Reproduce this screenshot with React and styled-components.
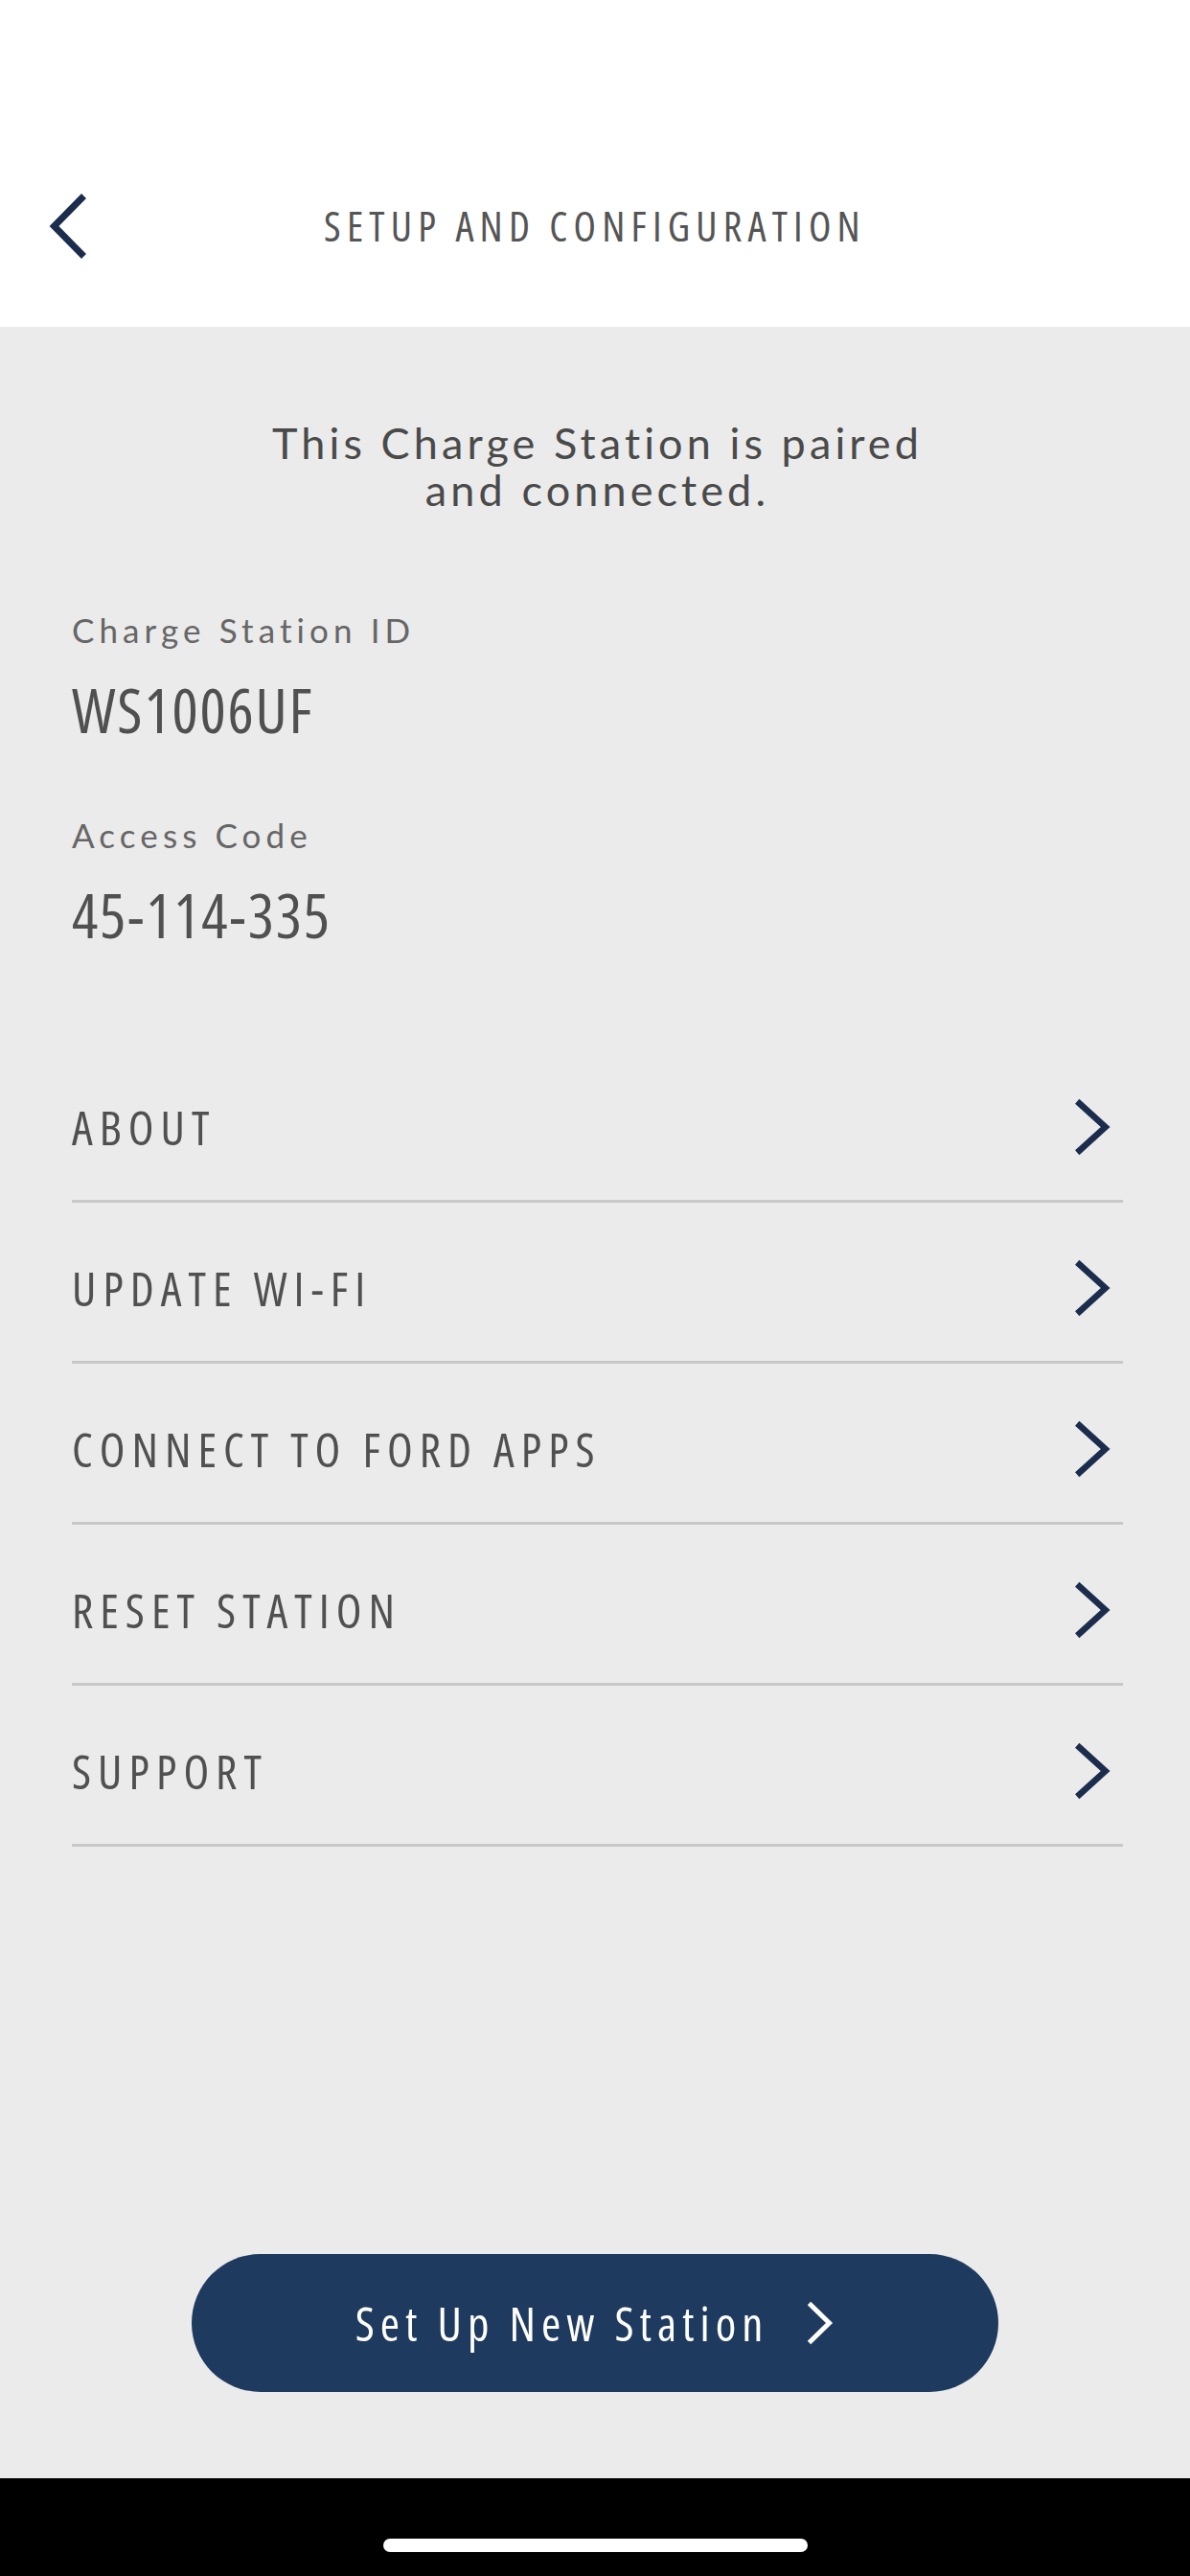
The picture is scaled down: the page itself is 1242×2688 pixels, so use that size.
import React from "react";
import styled, { createGlobalStyle } from "styled-components";

const GlobalStyle = createGlobalStyle`
  html, body { margin: 0; padding: 0; background: #ebebeb; }
  * { box-sizing: border-box; }
`;

const condensed = `"Open Sans", "Noto Sans", sans-serif`;
const humanist = `Lato, "Noto Sans", sans-serif`;

const Screen = styled.div`
  width: 1242px;
  height: 2688px;
  display: flex;
  flex-direction: column;
  background: #ebebeb;
  overflow: hidden;
`;

const Header = styled.header`
  background: #ffffff;
  height: 341px;
  padding-top: 130px;
  flex-shrink: 0;
`;

const NavBar = styled.div`
  height: 211px;
  display: grid;
  grid-template-columns: 160px 1fr 160px;
  align-items: center;
`;

const BackButton = styled.button`
  border: 0;
  background: none;
  padding: 0 0 0 50px;
  display: flex;
  align-items: center;
  height: 80px;
  cursor: pointer;
`;

const Title = styled.h1`
  margin: 0;
  text-align: center;
  font-family: ${condensed};
  font-stretch: 75%;
  font-weight: 400;
  font-size: 43px;
  letter-spacing: 6.2px;
  color: #555555;
  line-height: 1;
`;

const Content = styled.main`
  padding: 0 70px 0 75px;
  display: flex;
  flex-direction: column;
`;

const Message = styled.p`
  margin: 97px 0 0;
  text-align: center;
  font-family: ${humanist};
  font-size: 45px;
  line-height: 49px;
  letter-spacing: 4.1px;
  color: #4a4a4a;
`;

const InfoBlock = styled.div`
  margin-top: ${(p) => p.$top}px;
  display: flex;
  flex-direction: column;
  gap: 28px;
`;

const InfoLabel = styled.div`
  font-family: ${humanist};
  font-size: 35px;
  line-height: 40px;
  letter-spacing: 5.1px;
  color: #666666;
`;

const InfoValue = styled.div`
  font-family: ${condensed};
  font-stretch: 75%;
  font-size: 64px;
  line-height: 72px;
  letter-spacing: 1.8px;
  color: #505050;
`;

const Menu = styled.nav`
  margin-top: 96px;
  display: flex;
  flex-direction: column;
`;

const MenuRow = styled.div`
  height: 168px;
  padding-top: 12px;
  display: flex;
  align-items: center;
  justify-content: space-between;
  border-bottom: 3px solid #c8c8c8;
`;

const MenuLabel = styled.span`
  font-family: ${condensed};
  font-stretch: 75%;
  font-size: 49px;
  letter-spacing: 7px;
  color: #505050;
`;

const ChevronBox = styled.span`
  display: flex;
  margin-right: 12px;
`;

const Spacer = styled.div`
  flex: 1;
`;

const PrimaryButton = styled.button`
  align-self: center;
  width: 842px;
  height: 144px;
  border: 0;
  border-radius: 72px;
  background: #1f3a5f;
  color: #ffffff;
  display: flex;
  align-items: center;
  justify-content: center;
  gap: 39px;
  margin-bottom: 90px;
  font-family: ${condensed};
  font-stretch: 75%;
  font-size: 49px;
  letter-spacing: 6px;
  cursor: pointer;
  flex-shrink: 0;
`;

const HomeBar = styled.div`
  height: 102px;
  background: #000000;
  display: flex;
  justify-content: center;
  padding-top: 63px;
  flex-shrink: 0;
`;

const HomeIndicator = styled.div`
  width: 443px;
  height: 14px;
  border-radius: 7px;
  background: #ffffff;
`;

const Chevron = ({ w, h, stroke, color, dir = "right" }) => {
  const s = stroke / 2 + 1;
  const d =
    dir === "right"
      ? `M${s} ${s} L${w - s - 2} ${h / 2} L${s} ${h - s}`
      : `M${w - s} ${s} L${s + 2} ${h / 2} L${w - s} ${h - s}`;
  return (
    <svg width={w} height={h} viewBox={`0 0 ${w} ${h}`} fill="none">
      <path d={d} stroke={color} strokeWidth={stroke} strokeLinejoin="miter" strokeLinecap="butt" />
    </svg>
  );
};

const items = ["ABOUT", "UPDATE WI-FI", "CONNECT TO FORD APPS", "RESET STATION", "SUPPORT"];

export default function App() {
  return (
    <>
      <GlobalStyle />
      <Screen>
        <Header>
          <NavBar>
            <BackButton aria-label="Back">
              <Chevron w={42} h={72} stroke={7} color="#1b2c4d" dir="left" />
            </BackButton>
            <Title>SETUP AND CONFIGURATION</Title>
            <div />
          </NavBar>
        </Header>
        <Content>
          <Message>
            This Charge Station is paired
            <br />
            and connected.
          </Message>
          <InfoBlock $top={101}>
            <InfoLabel>Charge Station ID</InfoLabel>
            <InfoValue>WS1006UF</InfoValue>
          </InfoBlock>
          <InfoBlock $top={74}>
            <InfoLabel>Access Code</InfoLabel>
            <InfoValue>45-114-335</InfoValue>
          </InfoBlock>
          <Menu>
            {items.map((it) => (
              <MenuRow key={it}>
                <MenuLabel>{it}</MenuLabel>
                <ChevronBox>
                  <Chevron w={40} h={62} stroke={6.5} color="#1b2c4d" />
                </ChevronBox>
              </MenuRow>
            ))}
          </Menu>
        </Content>
        <Spacer />
        <PrimaryButton>
          <span>Set Up New Station</span>
          <Chevron w={30} h={48} stroke={5} color="#ffffff" />
        </PrimaryButton>
        <HomeBar>
          <HomeIndicator />
        </HomeBar>
      </Screen>
    </>
  );
}
